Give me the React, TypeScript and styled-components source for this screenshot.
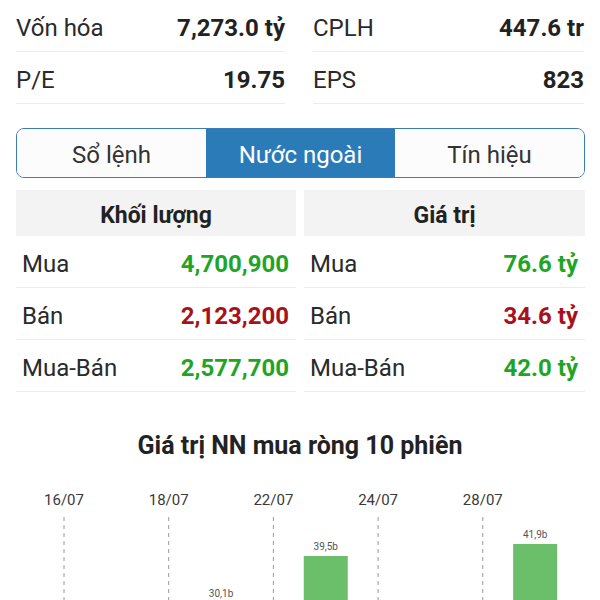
import React from "react";
import styled, { createGlobalStyle } from "styled-components";

const GlobalStyle = createGlobalStyle`
  html, body { margin: 0; padding: 0; background: #ffffff; }
  body { font-family: Roboto, "Noto Sans", "Liberation Sans", sans-serif; color: #222; }
  * { box-sizing: border-box; }
`;

const Page = styled.div`
  width: 600px;
  height: 600px;
  overflow: hidden;
  display: flex;
  flex-direction: column;
`;

const Section = styled.div`
  padding: 0 15px 0 16px;
`;

const StatsGrid = styled.div`
  display: grid;
  grid-template-columns: 269px 271px;
  column-gap: 28px;
`;

const StatRow = styled.div`
  height: 52px;
  display: flex;
  align-items: center;
  justify-content: space-between;
  border-bottom: 1px solid #ececec;
  font-size: 24px;
  padding-top: 4px;
`;

const StatLabel = styled.span`
  color: #2a2a2a;
`;

const StatValue = styled.span`
  font-weight: 700;
  color: #222;
`;

const TabBar = styled.div`
  margin-top: 24px;
  display: flex;
  height: 50px;
  border: 1.5px solid #3a7db4;
  border-radius: 8px;
  overflow: hidden;
`;

const Tab = styled.div<{ $active?: boolean }>`
  flex: 1;
  display: flex;
  align-items: center;
  justify-content: center;
  padding-top: 3px;
  font-size: 24px;
  background: ${(p) => (p.$active ? "#2b7bb9" : "#fcfcfc")};
  color: ${(p) => (p.$active ? "#ffffff" : "#333")};
`;

const Tables = styled.div`
  margin-top: 12px;
  display: grid;
  grid-template-columns: 280px 281px;
  column-gap: 8px;
`;

const TableHead = styled.div`
  height: 46px;
  padding-top: 5px;
  background: #f3f3f3;
  display: flex;
  align-items: center;
  justify-content: center;
  font-size: 23px;
  font-weight: 700;
  color: #222;
`;

const TableRow = styled.div`
  height: 52px;
  display: flex;
  align-items: center;
  justify-content: space-between;
  padding: 5px 7px 0 6px;
  border-bottom: 1px solid #ececec;
  font-size: 24px;
`;

const RowLabel = styled.span`
  color: #2a2a2a;
`;

const RowValue = styled.span<{ $tone: "up" | "down" }>`
  font-weight: 700;
  color: ${(p) => (p.$tone === "up" ? "#1fa526" : "#a8111b")};
`;

const ChartTitle = styled.div`
  margin-top: 36px;
  height: 36px;
  line-height: 36px;
  text-align: center;
  font-size: 25px;
  font-weight: 700;
  color: #222;
`;

const ChartSvg = styled.svg`
  display: block;
  flex: none;
`;

type Row = { label: string; value: string; tone: "up" | "down" };

const volume: Row[] = [
  { label: "Mua", value: "4,700,900", tone: "up" },
  { label: "Bán", value: "2,123,200", tone: "down" },
  { label: "Mua-Bán", value: "2,577,700", tone: "up" },
];

const valueRows: Row[] = [
  { label: "Mua", value: "76.6 tỷ", tone: "up" },
  { label: "Bán", value: "34.6 tỷ", tone: "down" },
  { label: "Mua-Bán", value: "42.0 tỷ", tone: "up" },
];

const sessions = [
  { date: "16/07", v: 8.2 },
  { date: "17/07", v: 12.4 },
  { date: "18/07", v: 5.6 },
  { date: "19/07", v: 30.1 },
  { date: "22/07", v: 14.8 },
  { date: "23/07", v: 39.5 },
  { date: "24/07", v: 9.3 },
  { date: "25/07", v: 18.7 },
  { date: "28/07", v: 22.1 },
  { date: "29/07", v: 41.9 },
];

const CHART_H = 136;

const ChartArea: React.FC = () => {
  const x0 = 64;
  const step = 52.35;
  const base = 289.5;
  const scale = 5.0;
  const barW = 44;
  return (
    <ChartSvg width={600} height={CHART_H} viewBox={`0 0 600 ${CHART_H}`}>
      {sessions.map((s, i) =>
        i % 2 === 0 ? (
          <g key={"g" + i}>
            <text
              x={x0 + step * i}
              y={41}
              textAnchor="middle"
              fontSize={15}
              fontFamily="Roboto, sans-serif"
              fill="#3a3a3a"
            >
              {s.date}
            </text>
            <line
              x1={x0 + step * i}
              x2={x0 + step * i}
              y1={53}
              y2={CHART_H}
              stroke="#9a9a9a"
              strokeWidth={1}
              strokeDasharray="4 4"
            />
          </g>
        ) : null
      )}
      {sessions.map((s, i) => {
        const cx = x0 + step * i;
        const top = base - s.v * scale;
        const labelY = top - 6;
        return (
          <g key={"b" + i}>
            <rect x={cx - barW / 2} y={top} width={barW} height={base - top} fill="#6cbf6a" />
            {labelY < CHART_H - 1 ? (
              <text
                x={cx}
                y={labelY}
                textAnchor="middle"
                fontSize={10}
                fontFamily="Roboto, sans-serif"
                fill="#555"
              >
                {s.v.toFixed(1).replace(".", ",") + "b"}
              </text>
            ) : null}
          </g>
        );
      })}
    </ChartSvg>
  );
};

const App: React.FC = () => (
  <>
    <GlobalStyle />
    <Page>
      <Section>
        <StatsGrid>
          <div>
            <StatRow>
              <StatLabel>Vốn hóa</StatLabel>
              <StatValue>7,273.0 tỷ</StatValue>
            </StatRow>
            <StatRow>
              <StatLabel>P/E</StatLabel>
              <StatValue>19.75</StatValue>
            </StatRow>
          </div>
          <div>
            <StatRow>
              <StatLabel>CPLH</StatLabel>
              <StatValue>447.6 tr</StatValue>
            </StatRow>
            <StatRow>
              <StatLabel>EPS</StatLabel>
              <StatValue>823</StatValue>
            </StatRow>
          </div>
        </StatsGrid>
        <TabBar>
          <Tab>Sổ lệnh</Tab>
          <Tab $active>Nước ngoài</Tab>
          <Tab>Tín hiệu</Tab>
        </TabBar>
        <Tables>
          <div>
            <TableHead>Khối lượng</TableHead>
            {volume.map((r) => (
              <TableRow key={r.label}>
                <RowLabel>{r.label}</RowLabel>
                <RowValue $tone={r.tone}>{r.value}</RowValue>
              </TableRow>
            ))}
          </div>
          <div>
            <TableHead>Giá trị</TableHead>
            {valueRows.map((r) => (
              <TableRow key={r.label}>
                <RowLabel>{r.label}</RowLabel>
                <RowValue $tone={r.tone}>{r.value}</RowValue>
              </TableRow>
            ))}
          </div>
        </Tables>
      </Section>
      <ChartTitle>Giá trị NN mua ròng 10 phiên</ChartTitle>
      <ChartArea />
    </Page>
  </>
);

export default App;
